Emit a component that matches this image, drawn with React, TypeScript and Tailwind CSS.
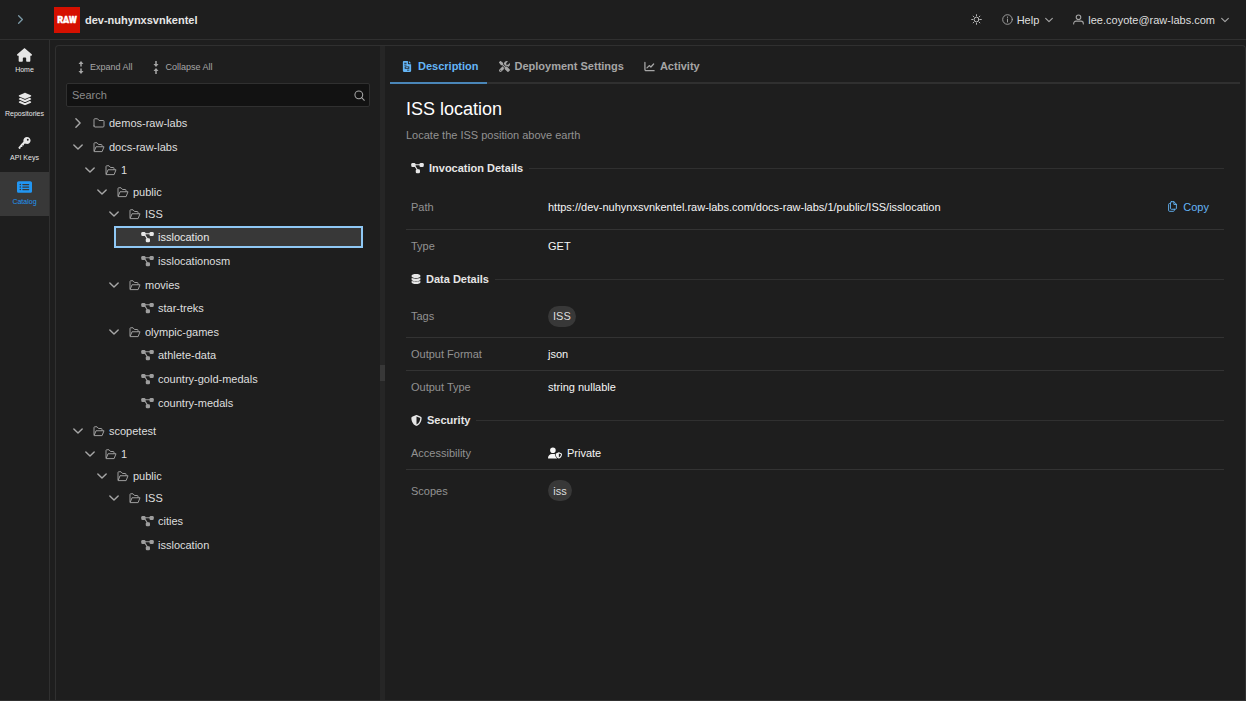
import React from "react";
import {
  FaHouse,
  FaLayerGroup,
  FaRectangleList,
  FaScrewdriverWrench,
  FaDatabase,
  FaShieldHalved,
  FaUserShield,
} from "react-icons/fa6";
import { IoKey } from "react-icons/io5";

type IconProps = { className?: string };

function Stroke({ className, width = 1.6, children }: IconProps & { width?: number; children: React.ReactNode }) {
  return (
    <svg
      viewBox="0 0 24 24"
      fill="none"
      stroke="currentColor"
      strokeWidth={width}
      strokeLinecap="round"
      strokeLinejoin="round"
      className={className}
      aria-hidden="true"
    >
      {children}
    </svg>
  );
}

const ChevronDown = ({ className }: IconProps) => (
  <Stroke className={className} width={3.4}>
    <path d="M2 7l10 10L22 7" />
  </Stroke>
);
const ChevronRight = ({ className }: IconProps) => (
  <Stroke className={className} width={3.4}>
    <path d="M7 2l10 10L7 22" />
  </Stroke>
);
const FolderIcon = ({ className }: IconProps) => (
  <Stroke className={className} width={2}>
    <path d="M2 18V5a1.500 1.500 0 0 1 1.500-1.500H9L12 7h8.500A1.500 1.500 0 0 1 22 8.500V18a2 2 0 0 1-2 2H4a2 2 0 0 1-2-2z" />
  </Stroke>
);
const FolderOpenIcon = ({ className }: IconProps) => (
  <Stroke className={className} width={2}>
    <path d="M2 19.500V5a1.500 1.500 0 0 1 1.500-1.500H8L11 7h5.500A1.500 1.500 0 0 1 18 8.500V11" />
    <path d="M2.500 20.500L6 11.500h16l-3.500 9z" />
  </Stroke>
);
const NodesIcon = ({ className }: IconProps) => (
  <svg viewBox="0 0 26 24" className={className} aria-hidden="true">
    <g fill="currentColor">
      <rect x="0.500" y="2" width="8.500" height="8" rx="2.500" />
      <rect x="17" y="2" width="8.500" height="8" rx="2.500" />
      <rect x="9.500" y="14.500" width="8.500" height="8" rx="2.500" />
    </g>
    <path d="M7 5.500h12M7 7l6 9" fill="none" stroke="currentColor" strokeWidth="2.400" />
  </svg>
);
const SunIcon = ({ className }: IconProps) => (
  <Stroke className={className} width={2}>
    <circle cx="12" cy="12" r="5.200" />
    <path d="M12 1.500v2.500M12 20v2.500M1.500 12H4M20 12h2.500M4.600 4.600l1.700 1.700M17.700 17.700l1.700 1.700M4.600 19.400l1.700-1.700M17.700 6.300l1.700-1.700" />
  </Stroke>
);
const InfoIcon = ({ className }: IconProps) => (
  <Stroke className={className} width={2}>
    <circle cx="12" cy="12" r="10.500" />
    <path d="M12 11v6.500M12 6.500v1" />
  </Stroke>
);
const UserIcon = ({ className }: IconProps) => (
  <Stroke className={className} width={2.3}>
    <circle cx="12" cy="7" r="5" />
    <path d="M1.500 22v-1.500a5 5 0 0 1 5-5h11a5 5 0 0 1 5 5V22" />
  </Stroke>
);
const SearchIcon = ({ className }: IconProps) => (
  <Stroke className={className} width={2.3}>
    <circle cx="10.500" cy="10.500" r="8.500" />
    <path d="M16.700 16.700L22.500 22.500" />
  </Stroke>
);
const ActivityIcon = ({ className }: IconProps) => (
  <Stroke className={className} width={2.8}>
    <path d="M2 3v15.500a2.500 2.500 0 0 0 2.500 2.500H22" />
    <path d="M6.500 15l5-5 3.500 3 6-6.500" />
  </Stroke>
);
const CopyIcon = ({ className }: IconProps) => (
  <Stroke className={className} width={2}>
    <path d="M9.500 1.500h5.500L20.500 7v9a2 2 0 0 1-2 2h-9a2 2 0 0 1-2-2V3.500a2 2 0 0 1 2-2z" />
    <path d="M15 1.500V7.500h5.500" />
    <path d="M7.500 5.500H5.500a2 2 0 0 0-2 2v13a2 2 0 0 0 2 2h8.500a2 2 0 0 0 2-2V18" />
  </Stroke>
);
const DocumentIcon = ({ className }: IconProps) => (
  <svg viewBox="0 0 20 24" className={className} aria-hidden="true">
    <path
      fill="currentColor"
      fillRule="evenodd"
      d="M3 0h9v5.500c0 .8.700 1.500 1.500 1.500H19v14a3 3 0 0 1-3 3H4a3 3 0 0 1-3-3V2a2 2 0 0 1 2-2zM14 0l5 5h-5zM4 4v1.800h5V4zM4 8v1.800h5V8zM5 12v5h10v-5zM10 19v1.800h5V19z"
    />
    <path fill="currentColor" d="M7 13.500h6v2H7z" />
  </svg>
);
const ExpandIcon = ({ className }: IconProps) => (
  <svg viewBox="0 0 12 26" fill="currentColor" className={className} aria-hidden="true">
    <path d="M6 0l5 6H7.500v5h-3V6H1zM6 26l5-6H7.500v-5h-3v5H1z" />
  </svg>
);
const CollapseIcon = ({ className }: IconProps) => (
  <svg viewBox="0 0 12 26" fill="currentColor" className={className} aria-hidden="true">
    <path d="M6 12l5-6H7.500V0h-3v6H1zM6 14l5 6H7.500v6h-3v-6H1z" />
  </svg>
);

type Node = { label: string; closed?: boolean; selected?: boolean; children?: Node[] };

const tree: Node[] = [
  { label: "demos-raw-labs", closed: true, children: [] },
  {
    label: "docs-raw-labs",
    children: [
      {
        label: "1",
        children: [
          {
            label: "public",
            children: [
              { label: "ISS", children: [{ label: "isslocation", selected: true }, { label: "isslocationosm" }] },
              { label: "movies", children: [{ label: "star-treks" }] },
              {
                label: "olympic-games",
                children: [{ label: "athlete-data" }, { label: "country-gold-medals" }, { label: "country-medals" }],
              },
            ],
          },
        ],
      },
    ],
  },
  {
    label: "scopetest",
    children: [
      {
        label: "1",
        children: [
          {
            label: "public",
            children: [{ label: "ISS", children: [{ label: "cities" }, { label: "isslocation" }] }],
          },
        ],
      },
    ],
  },
];

function TreeItem({ node, root }: { node: Node; root?: boolean }) {
  if (!node.children) {
    return (
      <li role="treeitem" aria-selected={!!node.selected} className="py-0.5">
        <button
          className={
            node.selected
              ? "flex h-5 w-full items-center gap-1 bg-[#383838] pl-[26px] text-[#e8e8e8] outline-2 -outline-offset-1 outline-[#8fc8f5]"
              : "flex h-5 w-full items-center gap-1 pl-[26px] text-[#dedede]"
          }
        >
          <NodesIcon className={node.selected ? "h-3 w-[13px] text-[#e8e8e8]" : "h-3 w-[13px] text-[#9e9e9e]"} />
          {node.label}
        </button>
      </li>
    );
  }
  return (
    <li role="treeitem" aria-expanded={!node.closed} className={root && node.closed ? "" : "pb-px"}>
      <button
        className={
          root
            ? "flex h-6 w-full items-center pl-1.5 text-[#dedede]"
            : "flex h-[22px] w-full items-center pl-1.5 text-[#dedede]"
        }
      >
        {node.closed ? (
          <ChevronRight className="mr-2.5 size-2.5 text-[#a6a6a6]" />
        ) : (
          <ChevronDown className="mr-2.5 size-2.5 text-[#a6a6a6]" />
        )}
        {node.closed ? (
          <FolderIcon className="mr-1 size-3 text-[#9e9e9e]" />
        ) : (
          <FolderOpenIcon className="mr-1 size-3 text-[#9e9e9e]" />
        )}
        {node.label}
      </button>
      {!node.closed && (
        <ul role="group" className="pl-3">
          {node.children.map((c) => (
            <TreeItem key={c.label} node={c} />
          ))}
        </ul>
      )}
    </li>
  );
}

function NavItem({ icon, label, active }: { icon: React.ReactNode; label: string; active?: boolean }) {
  return (
    <a
      href="#"
      aria-current={active ? "page" : undefined}
      className={
        active
          ? "flex h-11 flex-col items-center justify-center gap-0.5 bg-[#383838] pb-0.5 text-[7px] leading-[10px] text-[#2196f3]"
          : "flex h-11 flex-col items-center justify-center gap-0.5 pb-0.5 text-[7px] leading-[10px] text-[#e6e6e6]"
      }
    >
      {icon}
      {label}
    </a>
  );
}

function Section({ icon, title, children }: { icon: React.ReactNode; title: string; children: React.ReactNode }) {
  return (
    <section className="mb-0.5">
      <div className="flex h-8 items-center pl-[5px]">
        <h2 className="flex items-center gap-[5px] pr-1.5 font-bold text-[#e6e6e6]">
          {icon}
          {title}
        </h2>
        <div className="h-px flex-1 bg-[#303030]" />
      </div>
      <dl className="divide-y divide-[#333333]">{children}</dl>
    </section>
  );
}

function Row({
  label,
  height,
  action,
  children,
}: {
  label: string;
  height: string;
  action?: React.ReactNode;
  children: React.ReactNode;
}) {
  return (
    <div className={`flex items-center px-[5px] ${height}`}>
      <dt className="w-[137px] shrink-0 text-[#929292]">{label}</dt>
      <dd className="flex flex-1 items-center gap-[5px] text-[#f5f5f5]">
        {children}
        {action}
      </dd>
    </div>
  );
}

function Pill({ children }: { children: React.ReactNode }) {
  return (
    <span className="flex h-[21px] min-w-6 items-center justify-center rounded-full bg-[#383838] px-[5px] text-[#dedede]">
      {children}
    </span>
  );
}

export default function App() {
  return (
    <div className="h-screen bg-white pb-0.5 font-['Liberation_Sans',Arial,sans-serif] text-[11px] leading-4 text-[#dedede]">
      <div className="flex h-full flex-col border-b border-[#303030] bg-[#1e1e1e]">
        <header className="flex h-10 shrink-0 items-center border-b border-[#303030] pr-[17px]">
          <button aria-label="Expand menu" className="flex w-10 justify-center text-[#7b99a6]">
            <ChevronRight className="size-[9px]" />
          </button>
          <div className="ml-3.5 flex size-[26px] items-center justify-center bg-[#d51000] font-[Roboto,sans-serif] text-[9px] font-black text-white [-webkit-text-stroke:0.4px_white]">
            RAW
          </div>
          <span className="ml-[5px] font-bold text-[#e6e6e6]">dev-nuhynxsvnkentel</span>
          <div className="ml-auto flex items-center">
            <button aria-label="Toggle theme" className="mr-5 text-[#c4c4c4]">
              <SunIcon className="size-[11px]" />
            </button>
            <button className="mr-5 flex items-center gap-1">
              <InfoIcon className="size-[11px] text-[#a6a6a6]" />
              Help
              <ChevronDown className="ml-0.5 size-2 text-[#a6a6a6]" />
            </button>
            <button className="flex items-center gap-1">
              <UserIcon className="size-[11px] text-[#a6a6a6]" />
              lee.coyote@raw-labs.com
              <ChevronDown className="ml-0.5 size-2 text-[#a6a6a6]" />
            </button>
          </div>
        </header>

        <div className="flex min-h-0 flex-1">
          <nav className="w-[50px] shrink-0 border-r border-[#303030]">
            <NavItem icon={<FaHouse className="h-4 w-[15px]" />} label="Home" />
            <NavItem icon={<FaLayerGroup className="h-4 w-3.5" />} label="Repositories" />
            <NavItem icon={<IoKey className="h-4 w-[15px]" />} label="API Keys" />
            <NavItem icon={<FaRectangleList className="h-4 w-[15px]" />} label="Catalog" active />
          </nav>

          <div className="ml-[5px] mt-[5px] flex min-w-0 flex-1 rounded-t-sm border border-b-0 border-[#303030]">
            <aside className="w-[324px] shrink-0 overflow-hidden px-2.5 pt-2.5">
              <div className="flex h-[22px] items-center text-[9px] text-[#a6a6a6]">
                <button className="ml-3 flex items-center gap-1.5">
                  <ExpandIcon className="h-[13px] w-1.5" />
                  Expand All
                </button>
                <button className="ml-5 flex items-center gap-[7px]">
                  <CollapseIcon className="h-[13px] w-1.5" />
                  Collapse All
                </button>
              </div>
              <label className="mt-[5px] flex h-6 items-center rounded-xs border border-[#303030] bg-[#121212] pl-[5px] pr-1">
                <input
                  type="text"
                  aria-label="Search"
                  placeholder="Search"
                  className="min-w-0 flex-1 bg-transparent outline-none placeholder:text-[#8a8a8a]"
                />
                <SearchIcon className="size-[11px] text-[#a6a6a6]" />
              </label>
              <ul role="tree" className="mt-1 pl-px pr-2">
                {tree.map((n) => (
                  <TreeItem key={n.label} node={n} root />
                ))}
              </ul>
            </aside>

            <div role="separator" className="flex w-[5px] shrink-0 items-center bg-[#262626]">
              <div className="h-4 w-full bg-[#383838]" />
            </div>

            <main className="min-w-0 flex-1 px-[5px] pt-1">
              <div role="tablist" className="flex h-[34px] border-b-2 border-[#303030] font-bold text-[#a6a6a6]">
                <button
                  role="tab"
                  aria-selected="true"
                  className="-mb-0.5 flex items-center gap-1.5 border-b-2 border-[#4a86b8] pl-3 pr-2 text-[#64b5f6]"
                >
                  <DocumentIcon className="h-[11px] w-2.5" />
                  Description
                </button>
                <button role="tab" className="flex items-center gap-[5px] pl-3 pr-2">
                  <FaScrewdriverWrench className="size-[11px]" />
                  Deployment Settings
                </button>
                <button role="tab" className="flex items-center gap-[5px] pl-3 pr-2">
                  <ActivityIcon className="size-[11px]" />
                  Activity
                </button>
              </div>

              <div className="px-4 pt-[11px]">
                <h1 className="text-[18px] leading-7 text-white">ISS location</h1>
                <p className="mb-[9px] mt-1 text-[#929292]">Locate the ISS position above earth</p>

                <Section icon={<NodesIcon className="h-3 w-[13px]" />} title="Invocation Details">
                  <Row
                    label="Path"
                    height="min-h-[46px]"
                    action={
                      <button className="ml-auto mr-2.5 flex items-center gap-[5px] text-[#64b5f6]">
                        <CopyIcon className="size-[11px]" />
                        Copy
                      </button>
                    }
                  >
                    https://dev-nuhynxsvnkentel.raw-labs.com/docs-raw-labs/1/public/ISS/isslocation
                  </Row>
                  <Row label="Type" height="min-h-[31px]">
                    GET
                  </Row>
                </Section>
                <Section icon={<FaDatabase className="size-2.5" />} title="Data Details">
                  <Row label="Tags" height="min-h-[43px]">
                    <Pill>ISS</Pill>
                  </Row>
                  <Row label="Output Format" height="min-h-[33px]">
                    json
                  </Row>
                  <Row label="Output Type" height="min-h-[31px]">
                    string nullable
                  </Row>
                </Section>
                <Section icon={<FaShieldHalved className="size-[11px]" />} title="Security">
                  <Row label="Accessibility" height="min-h-[34px]">
                    <FaUserShield className="size-3.5" />
                    Private
                  </Row>
                  <Row label="Scopes" height="min-h-[41px]">
                    <Pill>iss</Pill>
                  </Row>
                </Section>
              </div>
            </main>
          </div>
        </div>
      </div>
    </div>
  );
}
